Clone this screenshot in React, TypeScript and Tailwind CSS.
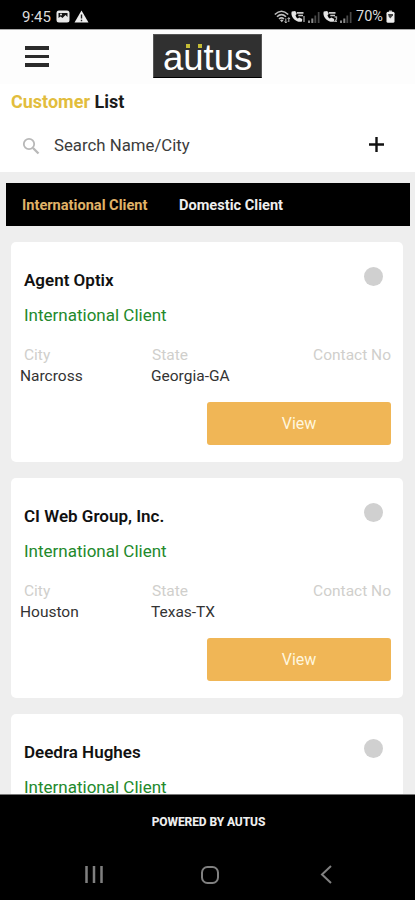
import React from "react";

const clients = [
  { name: "Agent Optix", city: "Narcross", state: "Georgia-GA" },
  { name: "CI Web Group, Inc.", city: "Houston", state: "Texas-TX" },
  { name: "Deedra Hughes", city: "", state: "" },
];

function PictureIcon() {
  return (
    <svg className="ml-[5px] block" width="14" height="13" viewBox="0 0 14 13">
      <rect x="0.5" y="0.5" width="13" height="12" rx="2.5" fill="#e8e8e8" />
      <path d="M2.500 3h9v4l-2-2-3 3-2-1.500-2 1.500z" fill="#111" />
      <circle cx="5" cy="4.500" r="1" fill="#e8e8e8" />
    </svg>
  );
}

function WarningIcon() {
  return (
    <svg className="ml-[4px] block" width="15" height="13" viewBox="0 0 15 13">
      <path d="M7.500 0.500L14.500 12.500H0.500z" fill="#ededed" />
      <path d="M7.500 4.500v4M7.500 9.800v1.400" stroke="#222" strokeWidth="1.400" />
    </svg>
  );
}

function WifiIcon() {
  return (
    <svg className="block" width="17" height="14" viewBox="0 0 17 14" fill="none" stroke="#bdbdbd" strokeWidth="1.600">
      <path d="M0.800 4.500Q7.500 -2 14.200 4.500M3 6.800Q7.500 2.400 12 6.800M5 9Q7.500 6.800 10 9" />
      <path d="M6 10.200L7.800 12.300l1.700-2.100Q7.800 8.800 6 10.200z" fill="#bdbdbd" stroke="none" />
      <path d="M11.800 8.500v4M14.800 8v4M10.600 11.500l1.200 1.500 1.200-1.500M13.600 9l1.200-1.500L16 9" strokeWidth="1" />
    </svg>
  );
}

function CallIcon({ sim }: { sim: string }) {
  return (
    <svg className="block" width="15" height="13" viewBox="0 0 15 13">
      <path
        d="M0.800 1.600C-0.200 4 0.800 7.500 3.600 9.800c2.300 1.800 4.700 2.500 7.400 1.700l.2-2.600-2.900-1.300-1.500 1C5.600 7.900 4.900 6.800 4.500 5.200l1.200-1.300L4.300 1z"
        fill="#e4e4e4"
      />
      <path d="M5.800 2h6.700v1.700H5.800zM7.300 4.800H12v1.500H7.300z" fill="#c9c9c9" />
      <path d={sim === "1" ? "M13 6v6" : "M11.500 7h2v2l-1.500 2.300h2"} stroke="#a8a8a8" strokeWidth="1.300" fill="none" />
    </svg>
  );
}

function SignalIcon() {
  return (
    <svg className="block" width="12" height="12" viewBox="0 0 12 12">
      <path d="M0 9.500h2V12H0zM3.300 7.500h2V12h-2z" fill="#8a8a8a" />
      <path d="M6.400 4.500h1.800V12H6.400zM9.800 1h1.700v11H9.800z" fill="#484848" />
    </svg>
  );
}

function BatteryIcon() {
  return (
    <svg className="block" width="9" height="13" viewBox="0 0 9 13">
      <path d="M3 0.500h3V2H3z" fill="#bbb" />
      <rect x="0.500" y="1.800" width="8" height="11" rx="1.500" fill="#eee" />
      <path d="M2 4h5v1.200L4.300 8.500 2.800 6.800z" fill="#444" />
    </svg>
  );
}

function StatusBar() {
  return (
    <div className="flex h-[29px] shrink-0 items-center justify-between bg-black pt-[4px] pr-[20px] pl-[22px] text-[#dcdcdc]">
      <div className="flex items-center">
        <span className="w-[29px] text-[15px] leading-[18px] whitespace-nowrap">9:45</span>
        <PictureIcon />
        <WarningIcon />
      </div>
      <div className="flex items-center">
        <WifiIcon />
        <span><CallIcon sim="1" /></span>
        <span className="ml-[2px]"><SignalIcon /></span>
        <span className="ml-[3px]"><CallIcon sim="2" /></span>
        <span className="ml-[2px]"><SignalIcon /></span>
        <span className="ml-[4px] w-[30px] text-[14.500px] leading-[18px] whitespace-nowrap">70%</span>
        <BatteryIcon />
      </div>
    </div>
  );
}

function Logo() {
  return (
    <div className="relative h-[44px] w-[109px] border border-[#555] border-b-black bg-[#303030]">
      <span className="block pl-[9px] font-['Liberation_Sans',Arial,sans-serif] text-[36.500px] leading-[46px] text-white">autus</span>
      <i className="absolute top-[9px] left-[32px] h-[4px] w-[4px] bg-[#c5bd36]" />
      <i className="absolute top-[9px] left-[44px] h-[4px] w-[4px] bg-[#c5bd36]" />
    </div>
  );
}

function Header() {
  return (
    <header className="flex h-[55px] shrink-0 items-start border-t border-[#aaa] bg-[#fdfdfd] pt-[4px] pl-[25px]">
      <button className="mt-[12px] flex w-[24px] flex-col gap-[5px]" aria-label="Menu">
        <span className="h-[3.500px] w-full bg-[#2b2b2b]" />
        <span className="h-[3.500px] w-full bg-[#2b2b2b]" />
        <span className="h-[3.500px] w-full bg-[#2b2b2b]" />
      </button>
      <div className="ml-[104px]"><Logo /></div>
    </header>
  );
}

function SearchRow() {
  return (
    <div className="flex h-[52px] items-center pr-[31px] pb-[3px] pl-[22px]">
      <svg className="mt-[2px] block" width="18" height="18" viewBox="0 0 18 18" fill="none" stroke="#b8b8b8">
        <circle cx="7" cy="7" r="5.200" strokeWidth="1.800" />
        <path d="M11 11l5.500 5.500" strokeWidth="2.300" />
      </svg>
      <span className="ml-[14px] text-[16.800px] leading-[20px] whitespace-nowrap text-[#3c3c3c]">Search Name/City</span>
      <svg className="ml-auto block" width="15" height="15" viewBox="0 0 15 15">
        <path d="M7.500 0v15M0 7.500h15" stroke="#111" strokeWidth="2.400" />
      </svg>
    </div>
  );
}

function Card({ name, city, state }: { name: string; city: string; state: string }) {
  return (
    <article className="h-[219.500px] shrink-0 rounded-[5px] bg-white pr-[12px] pl-[13px]">
      <div className="flex h-[58px] justify-between pt-[25px]">
        <h2 className="pt-[2px] text-[17px] leading-[22px] font-semibold whitespace-nowrap text-[#111]">{name}</h2>
        <span className="mr-[8px] h-[19px] w-[19px] rounded-full bg-[#d0d0d0]" />
      </div>
      <p className="h-[44px] pt-[4px] text-[17px] leading-[22px] text-[#23892b]">International Client</p>
      <div className="flex h-[22px] text-[15.500px] leading-[22px] text-[#d0cfcc]">
        <span className="w-[128px]">City</span>
        <span>State</span>
        <span className="ml-auto">Contact No</span>
      </div>
      <div className="-ml-[4px] flex h-[35.500px] text-[15.500px] leading-[21px] text-[#333]">
        <span className="w-[131px]">{city}</span>
        <span>{state}</span>
      </div>
      <button className="ml-auto block h-[43.500px] w-[184px] rounded-[3px] bg-[#f0b656] pt-[2px] text-[16px] text-[#fff6df]">View</button>
    </article>
  );
}

export default function App() {
  return (
    <div className="flex h-[900px] w-[415px] flex-col overflow-hidden bg-[#eeeeee] font-['Roboto',sans-serif]">
      <StatusBar />
      <Header />
      <section className="h-[88px] shrink-0 bg-white">
        <h1 className="h-[36px] pt-[7px] pl-[11px] text-[18px] leading-[22px] font-bold text-[#1b1b1b]">
          <span className="text-[#e2bd3d]">Customer</span> List
        </h1>
        <SearchRow />
      </section>
      <nav className="mt-[11px] mr-[5px] ml-[6px] flex h-[43px] shrink-0 items-center bg-black pt-[2px] pl-[16px] text-[14.600px] font-bold whitespace-nowrap">
        <span className="w-[157px] text-[#e0b368]">International Client</span>
        <span className="text-[#eee]">Domestic Client</span>
      </nav>
      <main className="flex min-h-0 flex-1 flex-col gap-[16.500px] overflow-hidden pt-[16px] pr-[12px] pl-[11px]">
        {clients.map((client) => (
          <Card key={client.name} {...client} />
        ))}
      </main>
      <footer className="h-[106px] shrink-0 border-t border-[#777] bg-black">
        <div className="flex h-[54px] items-center justify-center pl-[2px] text-[12px] font-extrabold tracking-[-0.100px] text-[#eee]">POWERED BY AUTUS</div>
        <svg className="block" width="415" height="51" viewBox="0 849 415 51" fill="none" stroke="#808080" strokeWidth="2">
          <path d="M86.500 866v17M94 866v17M101.500 866v17" strokeWidth="2.500" />
          <rect x="202" y="867" width="16" height="16" rx="5.500" />
          <path d="M331 866l-9 8.500 9 8.500" />
        </svg>
      </footer>
    </div>
  );
}
